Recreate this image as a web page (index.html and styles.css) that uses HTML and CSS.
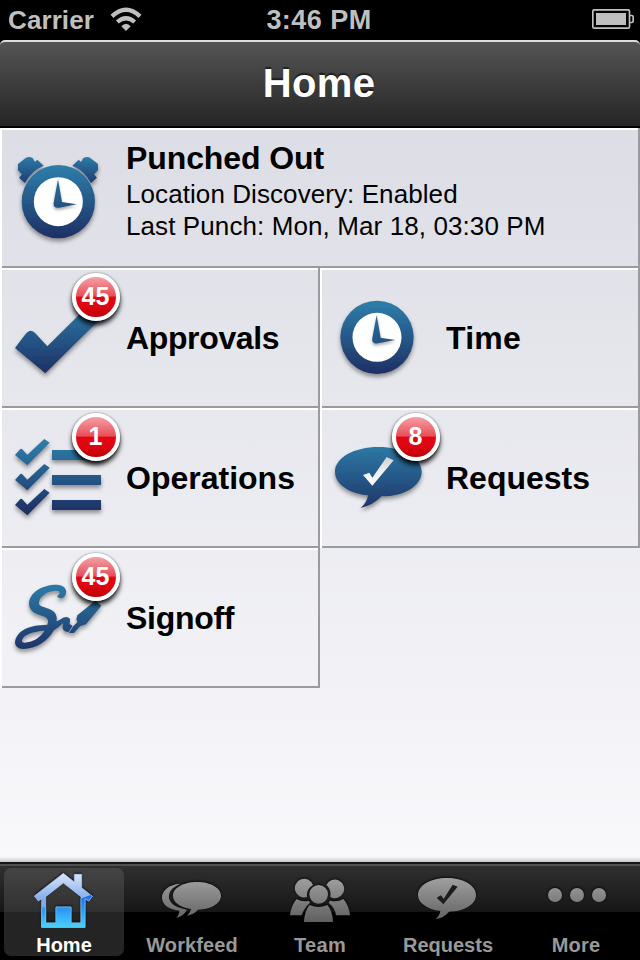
FILE: index.html
```html
<!DOCTYPE html>
<html lang="en">
<head>
<meta charset="utf-8">
<title>Home</title>
<link rel="stylesheet" href="styles.css">
</head>
<body>
<svg class="defs" width="0" height="0" aria-hidden="true">
  <defs>
    <linearGradient id="blue" gradientUnits="userSpaceOnUse" x1="0" y1="130" x2="0" y2="340"><stop offset="0" stop-color="#2d7ca8"/><stop offset=".5" stop-color="#245787"/><stop offset="1" stop-color="#1e2f63"/></linearGradient>
    <linearGradient id="bell" gradientUnits="userSpaceOnUse" x1="0" y1="110" x2="0" y2="190"><stop offset="0" stop-color="#2d7ca8"/><stop offset="1" stop-color="#1e3b72"/></linearGradient>
    <linearGradient id="grey" gradientUnits="userSpaceOnUse" x1="0" y1="84" x2="0" y2="214"><stop offset="0" stop-color="#a0a0a0"/><stop offset="1" stop-color="#606060"/></linearGradient>
    <linearGradient id="white" x1="0" y1="0" x2="0" y2="1"><stop offset="0" stop-color="#d0d0d0"/><stop offset=".5" stop-color="#eee"/><stop offset="1" stop-color="#fff"/></linearGradient>
    <linearGradient id="sky" gradientUnits="userSpaceOnUse" x1="0" y1="69" x2="0" y2="233"><stop offset="0" stop-color="#dde6fb"/><stop offset=".5" stop-color="#80aaea"/><stop offset="1" stop-color="#6ca0ea"/></linearGradient>
    <linearGradient id="cyan" gradientUnits="userSpaceOnUse" x1="0" y1="135" x2="0" y2="233"><stop offset="0" stop-color="#2368ee"/><stop offset=".4" stop-color="#2a91f4"/><stop offset="1" stop-color="#48d4fc"/></linearGradient>
    <clipPath id="shine"><path d="M90 178Q190 170 290 128V245H90Z"/></clipPath>
    <g id="clock">
      <circle cx="231" cy="232" r="110" fill="url(#blue)"/>
      <circle cx="231" cy="232" r="73.5" fill="#fff"/>
      <path class="hands" d="M230 165L242 233L286 240L234 250Q214 253 217 235Z" fill="url(#blue)"/>
    </g>
  </defs>
</svg>

<header class="status">
  <div class="carrier"><span class="carrier-name">Carrier</span>
    <svg class="wifi" width="32" height="24" viewBox="330 22 96 72"><g fill="none" stroke="#bfbfbf" stroke-width="13"><path d="M336 50Q378 10 420 50"/><path d="M352 67Q378 44 404 67"/></g><path d="M364 80Q378 64 392 80L378 94Z" fill="#bfbfbf"/></svg>
  </div>
  <div class="time">3:46 PM</div>
  <div class="battery"><svg width="42" height="20" viewBox="816 27 126 60"><rect x="818.5" y="29.500" width="110" height="55" rx="4" fill="none" stroke="#bfbfbf" stroke-width="5"/><rect x="828" y="39" width="90" height="36" fill="#bfbfbf"/><path d="M930 46.500H935Q939.500 46.500 939.500 51V63Q939.500 67.500 935 67.500H930" fill="none" stroke="#bfbfbf" stroke-width="5"/></svg></div>
</header>
<div class="navwrap"><h1 class="navbar"><span>Home</span></h1></div>

<main class="grid">
  <section class="tile wide">
    <svg class="icon" viewBox="6 30 360 408"><path d="M54 132L78 113Q87 109 98 114L105 126L112 119L131 137Q95 151 75 189L57 173L66 163L54 151ZM294 132L270 113Q261 109 250 114L243 126L236 119L217 137Q253 151 273 189L291 173L282 163L294 151Z" fill="url(#bell)"/><use href="#clock" x="-56" y="13"/></svg>
    <div class="punch"><h2><span class="t-punch">Punched Out</span></h2><p><span class="t-loc">Location Discovery: Enabled</span></p><p><span class="t-last">Last Punch: Mon, Mar 18, 03:30 PM</span></p></div>
  </section>
  <section class="tile">
    <svg class="icon" viewBox="6 30 360 408"><path d="M45 264L75 224Q92 202 106 220L142 259L270 132L318 160L136 340Z" fill="url(#blue)"/></svg>
    <h2><span class="t-app">Approvals</span></h2><b class="badge">45</b>
  </section>
  <section class="tile">
    <svg class="icon" viewBox="66 30 360 408"><use href="#clock"/></svg>
    <h2><span class="t-time">Time</span></h2>
  </section>
  <section class="tile">
    <svg class="icon" viewBox="6 30 360 408"><g fill="url(#blue)"><path d="M45 165L59 149Q64 143 71 152L82 164L133 117L149 128L82 196Z"/><path d="M45 240L59 224Q64 218 71 227L82 239L133 192L149 203L82 271Z"/><path d="M45 315L59 299Q64 293 71 302L82 314L133 267L149 278L82 346Z"/><path d="M156 150H303V180H156ZM156 225H303V255H156ZM156 300H303V330H156Z"/></g></svg>
    <h2><span class="t-ops">Operations</span></h2><b class="badge">1</b>
  </section>
  <section class="tile">
    <svg class="icon" viewBox="66 30 360 408"><path d="M235 141C307 141 365 173 365 215C365 256 315 289 245 289Q220 315 182 324Q201 308 204 286C145 279 105 252 105 215C105 173 163 141 235 141Z" fill="url(#blue)"/><path d="M189 225L208 218L217 233L260 171L281 181L217 257Z" fill="url(#white)"/></svg>
    <h2><span class="t-req">Requests</span></h2><b class="badge">8</b>
  </section>
  <section class="tile">
    <svg class="icon" viewBox="6 30 360 408"><g fill="url(#blue)"><path fill-rule="evenodd" d="M171 169C182 162 183 151 166 152C137 153 115 174 117 191C120 204 157 201 167 222C171 231 171 238 169 244C184 240 193 225 207 234C216 240 203 254 213 254L218 258L206 276C190 275 184 266 190 250C178 259 172 266 162 271C143 304 108 327 70 327C51 326 42 315 46 301C53 274 82 255 142 254C148 238 141 232 125 227C103 221 87 212 87 190C88 157 129 133 171 134C195 135 203 151 196 166C190 178 178 177 171 169ZM134 272C101 274 73 283 67 298C63 307 70 310 82 307C105 303 123 289 134 272Z"/><path d="M286 182L304 197L258 253L241 258L222 279L207 279L220 258L232 247L229 238L232 226Z"/></g></svg>
    <h2><span class="t-sign">Signoff</span></h2><b class="badge">45</b>
  </section>
</main>

<nav class="tabs">
  <div class="tab active"><svg viewBox="0 48 384 192"><path fill="url(#sky)" stroke="#a8d0fc" stroke-width="2" fill-rule="evenodd" d="M103 138L190 70L223 96V73H245V113L277 139L266 153L255 146V232H125V146L115 153ZM190 99L137 140V219H168V171H213V219H243V140Z"/><path clip-path="url(#shine)" fill="url(#cyan)" stroke="#63c5fb" stroke-width="2" fill-rule="evenodd" d="M103 138L190 70L223 96V73H245V113L277 139L266 153L255 146V232H125V146L115 153ZM190 99L137 140V219H168V171H213V219H243V140Z"/></svg><span>Home</span></div>
  <div class="tab"><svg viewBox="384 48 384 192"><g fill="url(#grey)"><path d="M541 101C503 104 486 123 486 143C486 162 504 178 538 182Q539 193 529 203Q551 198 561 179Q514 171 507 145Q503 117 541 101Z"/><path d="M591 96C632 96 663 114 663 137C663 160 632 178 594 179Q583 192 561 197Q572 188 573 177C541 172 519 157 519 137C519 114 550 96 591 96Z"/></g></svg><span class="t-work">Workfeed</span></div>
  <div class="tab"><svg viewBox="78 48 384 192"><g fill="url(#grey)"><path d="M249 105A28 28 0 1 0 231 141Q228 117 249 105ZM289 105A28 28 0 1 1 301 141Q304 117 289 105Z"/><circle cx="266" cy="133" r="28"/><path d="M200 147Q217 157 236 152L240 158Q222 174 215 196H180Q183 166 200 147ZM340 147Q323 157 300 152L296 158Q315 174 318 196H360Q357 166 340 147ZM239 165Q265 177 292 165Q308 183 309 216H222Q223 183 239 165Z"/></g></svg><span class="t-team">Team</span></div>
  <div class="tab"><svg viewBox="-48 48 384 192"><path fill="url(#grey)" d="M141 84C189 84 228 106 228 135C228 164 190 185 147 185Q133 203 107 207Q120 195 121 183C82 178 54 159 54 135C54 106 93 84 141 84Z"/><path fill="#1c1c1c" d="M110 143L123 136L131 147L158 104L173 110L130 163Z"/></svg><span class="t-treq">Requests</span></div>
  <div class="tab"><svg viewBox="336 48 384 192"><g fill="url(#grey)"><circle cx="465" cy="135" r="21"/><circle cx="531" cy="135" r="21"/><circle cx="597" cy="135" r="21"/></g></svg><span class="t-more">More</span></div>
</nav>
</body>
</html>
```
FILE: styles.css
```css
* { box-sizing: border-box; margin: 0; padding: 0; }
body { width: 640px; height: 960px; display: flex; flex-direction: column; overflow: hidden; background: #000; font-family: "Liberation Sans", Arial, sans-serif; color: #000; }
.defs { position: absolute; }
.status { height: 40px; flex: none; display: grid; grid-template-columns: 1fr 120px 1fr; color: #bfbfbf; font-size: 26px; font-weight: bold; line-height: 40px; }
.carrier { display: flex; padding-left: 8px; gap: 16px; }
.carrier-name { width: 86px; letter-spacing: .1px; }
.wifi { margin-top: 7px; }
.time { text-align: center; white-space: nowrap; font-size: 27px; letter-spacing: .45px; padding-right: 2px; }
.battery { display: flex; justify-content: flex-end; padding: 9px 6px 0 0; }
.navwrap { height: 88px; flex: none; background: #000; padding-bottom: 2px; }
.navbar { height: 86px; border-top: 2px solid #dedede; border-radius: 5px 5px 0 0; background: linear-gradient(#545454, #252525); color: #fff; font-size: 40px; line-height: 82px; letter-spacing: .4px; text-align: center; text-shadow: 0 -2px 1px rgba(0,0,0,.55); }
.navbar span { margin-right: 2px; }
.grid { flex: 1; display: grid; grid-template-columns: 320px 320px; grid-auto-rows: 140px; background: linear-gradient(transparent calc(100% - 5px), #c5c5c8), linear-gradient(#dcdde5, #f9f9fc); }
.tile { position: relative; display: flex; align-items: center; padding: 2px; box-shadow: inset 2px 0 #fff, inset 0 -2px #9b9b9d, inset -2px 0 #9b9b9d, inset 0 2px #fff; }
.wide { grid-column: span 2; }
.icon { width: 120px; height: 136px; flex: none; filter: drop-shadow(0 3px 2px rgba(0,0,0,.4)); }
.hands { filter: drop-shadow(0 6px 5px rgba(0,0,0,.35)); }
h2 { font-size: 32px; line-height: 38px; padding-left: 4px; white-space: nowrap; }
.punch { align-self: flex-start; padding-top: 9px; }
.punch p { position: relative; top: 1px; padding-left: 4px; font-size: 26px; line-height: 32px; white-space: nowrap; }
.t-punch { letter-spacing: -.1px; }
.t-loc { letter-spacing: .08px; }
.t-last { letter-spacing: .1px; }
.t-app { letter-spacing: -.36px; }
.t-time { letter-spacing: .2px; }
.t-sign { letter-spacing: -.3px; }
.badge { position: absolute; left: 72px; top: 5px; width: 48px; height: 48px; border: 4px solid #fff; border-radius: 50%; background: linear-gradient(#f5a0a6 0, #e84e58 48%, #e10612 50%, #e10612 70%, #bd0007 100%); color: #fff; font-size: 25px; line-height: 39px; text-align: center; box-shadow: 0 4px 5px rgba(0,0,0,.9), 0 0 2px rgba(0,0,0,.5); }
.badge { text-indent: -1px; }
.tabs { height: 98px; flex: none; display: flex; border-top: 2px solid #171717; background: linear-gradient(#505050 2px, #2f2f2f 2px, #161616 48px, #000 48px); }
.tab { width: 128px; color: #999; font-size: 20px; font-weight: bold; line-height: 24px; text-align: center; display: flex; flex-direction: column; align-items: center; padding-top: 2px; }
.tab svg { width: 128px; height: 64px; flex: none; filter: drop-shadow(0 -1px 1px rgba(0,0,0,.7)); }
.tab span { margin-top: 3px; white-space: nowrap; }
.tab .t-work { letter-spacing: .1px; }
.tab .t-team { letter-spacing: .3px; }
.tab .t-more { letter-spacing: .2px; }
.active { width: 120px; height: 88px; margin: 4px; margin-top: 4px; padding-top: 0; border-radius: 7px; background: linear-gradient(#444 0, #303030 44px, #242424 44px, #242424 100%); color: #fff; }
.active svg { margin-top: -2px; }
```
